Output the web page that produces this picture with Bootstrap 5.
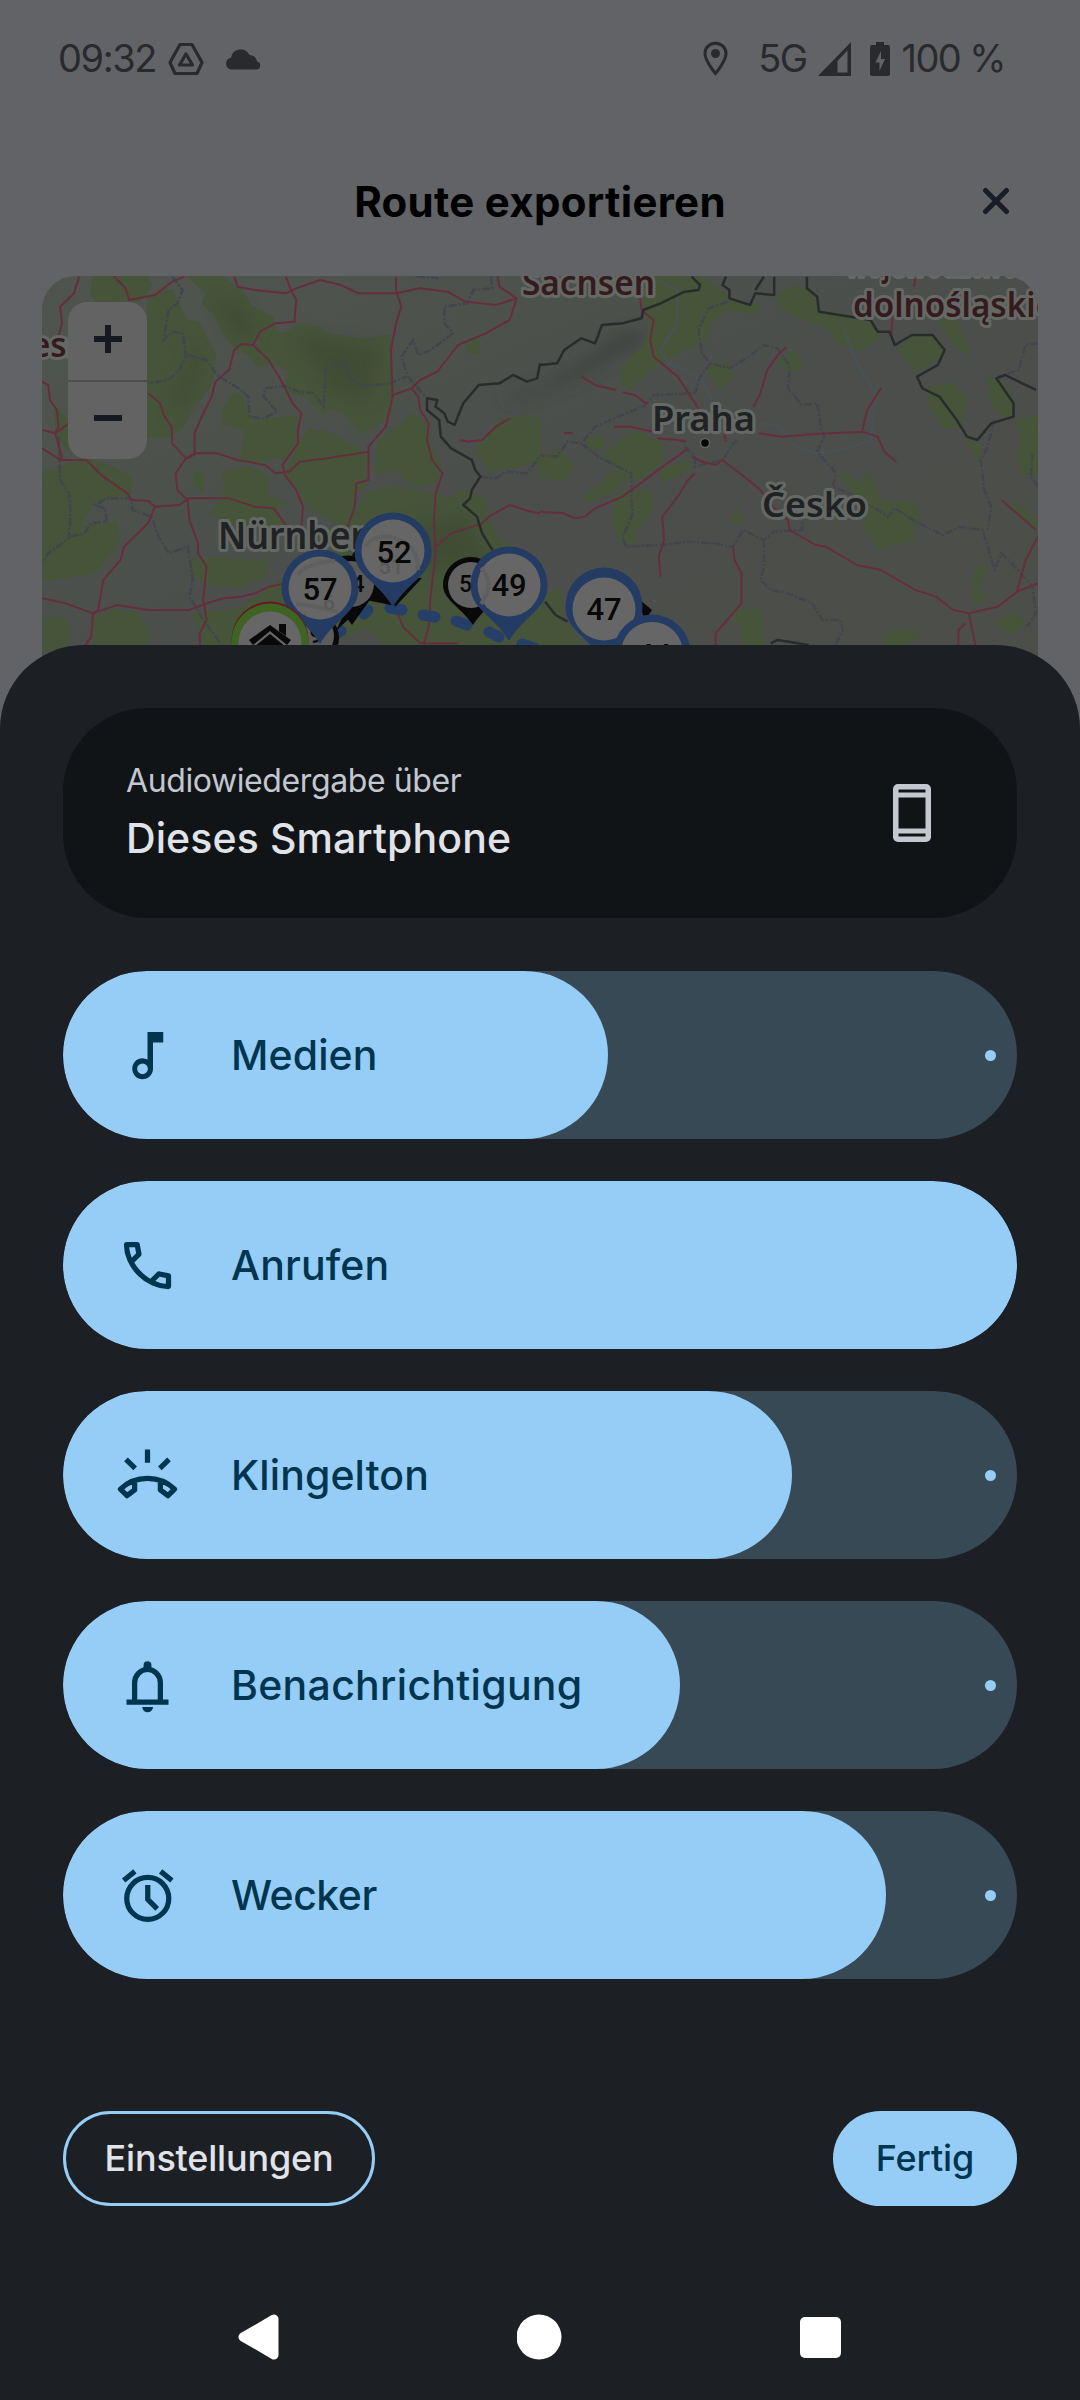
<!DOCTYPE html>
<html lang="de">
<head>
<meta charset="utf-8">
<meta name="viewport" content="width=device-width, initial-scale=1">
<title>Route exportieren</title>
<link href="https://cdn.jsdelivr.net/npm/bootstrap@5.3.0/dist/css/bootstrap.min.css" rel="stylesheet">
<style>
body{width:1080px;height:2400px;overflow:hidden;background:#626367;font-family:Inter,"Liberation Sans",sans-serif;}
svg{display:block;flex:none}
.statusbar{height:117px;padding:0 75px 0 58px;color:#292a2c;font-size:38px}
.titlebar{height:159px}
.title-text{font-weight:700;font-size:42px;letter-spacing:.3px;line-height:50px;color:#000;margin-top:60px}
.close-x{right:70px;top:70px}
.mapbox{margin:0 42px;width:996px;height:460px;border-radius:34px 34px 0 0;overflow:hidden;background:#505450}
.zoomctl{left:26px;top:26px;width:79px;height:157px;border-radius:19px;background:#636363;overflow:hidden}
.zoomctl>div+div{border-top:2px solid #4e4e4e}
.sheet{margin-top:-91px;height:1755px;padding:63px 63px 0;background:#1c1f24;border-radius:84px 84px 0 0;z-index:2}
.device{height:210px;border-radius:84px;background:#101417;padding:0 86px 4px 63px;margin-bottom:53px}
.dev-label{font-size:32px;line-height:44px;letter-spacing:-.4px;color:#c3c7cf}
.dev-name{font-size:41px;line-height:50px;font-weight:500;letter-spacing:.1px;color:#e0e3e8;margin-top:10px}
.vol{height:168px;border-radius:84px;background:#374955;overflow:hidden}
.vol-fill{height:168px;border-radius:84px;background:#95cdf7;color:#003550;padding-left:53px}
.vol-name{font-size:41px;font-weight:500;letter-spacing:.1px;margin-left:52px;padding-top:2px;white-space:nowrap}
.vol-dot{width:11px;height:11px;border-radius:50%;background:#95cdf7;margin-right:21px}
.pillbtn{height:95px;border-radius:48px;font-size:36px;font-weight:500;display:flex;align-items:center;justify-content:center;padding:0 0 2px}
.b-set{width:312px;border:3px solid #95cdf7;color:#e0e3e8;letter-spacing:-.2px}
.b-done{width:184px;background:#95cdf7;color:#003550;letter-spacing:-.1px}
.actions{margin-top:132px}
.navkeys{margin-top:106px;padding:0 176px 0 175px;height:50px}
.halo{font-family:"Noto Sans",sans-serif;font-weight:600;fill:#202223;paint-order:stroke;stroke:#656965;stroke-width:6px;stroke-linejoin:round}
.region{fill:#351b1e}
.pinno{font-family:Roboto,sans-serif;font-weight:500;fill:#080808;text-anchor:middle}
.wood path{fill:#46553a;stroke:#46553a;stroke-width:6;stroke-linejoin:round}
.road path{fill:none;stroke:#662e3d;stroke-width:2;vector-effect:non-scaling-stroke;stroke-linejoin:round}
.county path{fill:none;stroke:#42444e;stroke-width:2.4;stroke-dasharray:8 2 2 2;vector-effect:non-scaling-stroke}
.frontier path{fill:none;stroke:#292c2d;stroke-width:2.5;vector-effect:non-scaling-stroke;stroke-linejoin:round}
.river path{fill:none;stroke:#46545a;stroke-width:1.8;vector-effect:non-scaling-stroke}
</style>
</head>
<body class="position-relative">
<div class="statusbar d-flex align-items-center">
  <span style="letter-spacing:-1.4px">09:32</span>
  <svg style="margin-left:12px" width="36" height="34" viewBox="0 0 36 34" fill="none" stroke="#292a2c" stroke-width="3.2" stroke-linejoin="round"><path d="M12 2.500H24L34 20.500 29 31.500H7L2 20.500Z"/><path d="M18 12L24.500 23H11.500Z"/></svg>
  <svg style="margin-left:21px" width="37" height="22" viewBox="0 0 37 22" fill="#292a2c"><path d="M6 21.500a6 6 0 0 1 0-11.800A9.800 9.800 0 0 1 24.500 7a7.500 7.500 0 0 1 7.500 6.500 4.100 4.100 0 0 1 0 8Z"/></svg>
  <svg class="ms-auto" width="25" height="36" viewBox="0 0 25 36"><path d="M12.500 2.200C6.500 2.200 2 6.700 2 12.500 2 20 12.500 32.500 12.500 32.500S23 20 23 12.500C23 6.700 18.500 2.200 12.500 2.200Z" fill="none" stroke="#292a2c" stroke-width="3"/><circle cx="12.500" cy="12.500" r="4.500" fill="#292a2c"/></svg>
  <span style="margin-left:30px;letter-spacing:-1.6px">5G</span>
  <svg style="margin-left:11px" width="33" height="34" viewBox="0 0 33 34"><path fill="#292a2c" fill-rule="evenodd" d="M33 0V34H0ZM29.500 8.500L19.500 19V30.500H29.500Z"/></svg>
  <svg style="margin-left:19px" width="20" height="34" viewBox="0 0 20 34"><path fill="#292a2c" fill-rule="evenodd" d="M6 0h8v3h4a2 2 0 0 1 2 2v27a2 2 0 0 1-2 2H2a2 2 0 0 1-2-2V5a2 2 0 0 1 2-2h4ZM11 9L5.500 20.500h4V29L15 17h-4Z"/></svg>
  <span style="margin-left:12px;letter-spacing:-1.600px;white-space:nowrap">100 %</span>
</div>
<div class="titlebar position-relative d-flex justify-content-center">
  <div class="title-text">Route exportieren</div>
  <svg class="close-x position-absolute" width="28" height="28" viewBox="0 0 28 28" stroke="#191d27" stroke-width="5" stroke-linecap="round"><path d="M3.500 3.500L24.500 24.500M24.500 3.500L3.500 24.500"/></svg>
</div>
<div class="mapbox position-relative">
<svg width="996" height="460" viewBox="42 276 996 460">
<defs>
<linearGradient id="shade" x1="0" y1="0" x2="1" y2="1"><stop offset="0" stop-color="#4f554e"/><stop offset=".5" stop-color="#4b4e4b"/><stop offset="1" stop-color="#4d4e49"/></linearGradient>
<filter id="soft" x="-20%" y="-40%" width="140%" height="180%"><feGaussianBlur stdDeviation="22"/></filter>
</defs>
<rect x="42" y="276" width="996" height="460" fill="url(#shade)"/>
<g transform="translate(0 260) scale(.34439 .33333)">
<g class="wood">
<path d="M270 50L425 48 440 75 410 120 375 125 330 120 290 135 265 105Z"/>
<path d="M545 48L640 48 700 90 730 140 790 170 800 215 740 235 690 270 650 225 620 160 590 130 600 100Z"/>
<path d="M430 110L500 90 540 180 580 190 625 290 610 380 560 440 530 500 490 530 430 530Z"/>
<path d="M700 260L760 250 745 215 830 220 870 195 920 200 960 225 1010 230 1050 240 1138 225 1130 300 1145 370 1135 460 1100 490 1050 520 1000 460 960 440 940 460 890 410 830 390 840 330 790 310 750 320Z"/>
<path d="M680 400L705 410 720 470 760 480 860 470 855 560 830 600 800 590 740 610 700 600 715 510 650 490 650 440Z"/>
<path d="M870 540L900 510 960 520 1010 550 1065 590 1060 680 1030 700 1030 800 980 790 900 740 860 680 830 650Z"/>
<path d="M1100 540L1170 490 1200 460 1240 490 1250 560 1280 620 1265 670 1200 680 1150 630 1090 640Z"/>
<path d="M650 640L720 620 780 650 770 700 830 730 800 740 820 790 700 800 610 760 640 720 655 690Z"/>
<path d="M122 640L250 595 320 620 380 650 380 700 330 710 270 730 230 800 340 790 345 850 270 940 200 950 122 960Z"/>
<path d="M1070 700L1150 680 1240 700 1300 715 1350 690 1410 720 1420 780 1440 830 1500 870 1568 900 1568 1170 1140 1170 1060 1100 1000 1130 900 1150 700 1160 680 1060 900 900 900 820 1000 800Z"/>
<path d="M550 900L650 895 700 900 780 900 770 950 700 980 600 970 560 940Z"/>
<path d="M1380 570L1420 530 1450 480 1530 465 1568 480V600L1500 620 1420 630Z"/>
<path d="M270 1080L330 1050 400 1060 440 1130 410 1170H280Z"/><path d="M122 1080L180 1075 205 1110 190 1170H122Z"/>
<path d="M560 1060L700 1050 690 1170H600Z"/><path d="M1355 245L1390 235 1390 280 1355 275Z"/><path d="M565 640L590 635 590 700 562 670Z"/><path d="M160 450L200 480 200 570 165 530Z"/>
</g>
<g fill="#3a4632" opacity=".5" filter="url(#soft)"><path d="M490 470L560 260 590 300 540 420Z"/><path d="M620 120L700 130 750 230 690 240Z"/><path d="M860 220L1100 260 1080 420 960 400Z"/><path d="M1150 800L1350 760 1450 950 1200 930Z"/></g>
<g class="county">
<path d="M500 50L530 90 515 130 490 150 475 240 500 215 530 220 540 290 520 330 490 360 430 370"/>
<path d="M545 285L600 300 630 345 700 390 720 410 725 470 765 475 805 455 765 410 770 385 825 378 870 395 910 400 940 440 945 330 1000 305 1020 360 1060 378 1130 370 1180 350"/>
<path d="M1210 50L1280 55M1425 50L1430 85 1375 90 1355 130 1290 140 1290 190 1315 220 1250 270 1215 285 1200 240 1165 290 1185 350 1235 410"/>
<path d="M170 530L175 660 200 700 205 760 200 835 140 880 122 910"/>
<path d="M205 830L245 820 265 790 310 785 305 745 275 735 310 715 380 715 385 750 440 770 460 830 490 880 545 860 560 960 550 1010 590 1080 640 1150"/>
<path d="M1395 650L1440 655 1470 635 1530 640 1568 590"/>
</g>
<g class="road">
<path d="M230 50L215 100 175 140 180 190 170 230"/>
<path d="M330 48L365 85 375 120 450 105 500 65 535 50"/>
<path d="M680 50L690 80 740 90 830 100 860 85 930 60 990 75 1040 100 1150 100 1220 85 1300 95 1350 125 1440 135 1500 115 1450 80 1445 50"/>
<path d="M830 50L845 90 860 120 855 185 800 190 755 215 735 255 700 252 680 270 665 330 625 365 615 410 590 460 565 520 565 580 540 595"/>
<path d="M735 255L780 300 810 350 850 430 875 460 865 510 865 550 820 615 830 650 860 690 880 740 875 800"/>
<path d="M1150 50L1150 90 1165 140 1150 190 1135 270 1140 410 1120 500 1070 560 1070 660 1035 670 1030 740 1010 800"/>
<path d="M1500 115L1480 180 1410 220 1330 255 1270 335 1220 360 1195 385 1140 405"/>
<path d="M1195 385L1215 410 1220 450 1245 490 1240 540 1255 600 1285 640 1265 700 1260 780 1265 880 1250 1010 1245 1100 1230 1155"/>
<path d="M430 400L465 430 475 465 498 500 500 550 540 595 510 640 515 690 545 720 550 780 575 850 575 880 600 920 590 1020 600 1080 580 1120 580 1160"/>
<path d="M122 510L160 520 200 490M122 365L140 375 145 420 165 450 170 500 160 520 180 590 175 600 122 565M175 600L250 600 300 650 370 700 380 720 430 722 450 740 520 735 545 718"/>
<path d="M545 595L570 580 630 580 690 600 770 615 800 640 840 635 870 605 950 595 1070 575"/>
<path d="M545 715L665 715 740 740 795 745 830 795"/>
<path d="M450 740L430 790 360 860 350 900 300 960 285 1050 270 1060 265 1130 245 1160"/>
<path d="M122 1015L190 1030 270 1060 340 1035 430 1050 550 1050 600 1030 650 1015 700 1010 740 1000 780 980 830 970"/>
<path d="M1265 860L1310 820 1400 790 1420 770 1480 735 1540 755 1568 760"/>
<path d="M1335 540L1360 545 1400 540 1440 500 1480 475M1150 1050L1170 1100 1220 1150 1330 1150"/>
</g>
<g class="frontier"><path d="M1568 310L1560 355 1530 365 1490 345 1450 370 1390 375 1345 430 1320 495 1300 485 1290 460 1265 440 1270 420 1240 415 1240 450 1275 480 1280 530 1310 565 1370 600 1380 630 1395 650 1370 690 1365 715 1345 735 1385 770 1400 820 1430 870"/></g>
</g>
<g transform="translate(540 260) scale(.34439 .33333)">
<path d="M-120 420L0 380 130 300 230 220 310 210 300 250 200 300 100 360-60 420Z" fill="#3c403c" opacity=".75" filter="url(#soft)"/>
<g class="wood">
<path d="M305 48L460 48 520 90 560 120 640 140 620 160 540 150 490 190 490 230 440 260 360 300 320 330 260 385 235 370 240 320 300 260 320 200 300 150Z"/>
<path d="M690 100L740 80 780 90 810 155 870 160 960 190 990 230 930 270 860 240 830 200 730 165 695 140Z"/>
<path d="M1040 270L1100 220 1160 240 1175 280 1120 320 1090 330Z"/>
<path d="M1130 380L1200 370 1240 420 1215 500 1170 500 1130 440Z"/>
<path d="M1150 180L1210 180 1250 280 1220 270Z"/><path d="M1295 350L1350 370 1380 440 1360 470 1320 450Z"/>
<path d="M495 310L550 310 560 350 525 380 490 340ZM690 300L740 275 765 310 740 335 700 320Z"/>
<path d="M245 530L290 515 355 550 350 610 300 650 250 660 200 700 140 725 130 710 190 660 220 620 180 590Z"/>
<path d="M0 590L60 570 100 620 70 660 0 650ZM130 540L180 530 185 560 150 575ZM350 630L430 600 435 630 360 665Z"/>
<path d="M220 710L260 690 325 700 320 760 280 810 270 850 240 850 215 790Z"/>
<path d="M860 635L930 670 950 640 985 700 980 730 1070 725 1100 750 1080 840 1040 850 980 860 940 800 950 770 920 710Z"/>
<path d="M555 780L575 745 585 790ZM1235 540L1280 560 1270 600ZM1265 925L1300 920 1270 980 1290 1020 1260 1030Z"/>
<path d="M1385 480L1446 470V640L1400 640 1385 590 1400 540ZM1360 730L1410 750 1446 800 1420 790Z"/>
<path d="M560 1050L640 1050 650 1170H590L590 1120ZM1000 1120L1050 1110 1100 1120 1050 1170H1000ZM1320 1090L1380 1060 1410 1090 1370 1120Z"/>
<path d="M-40 960L0 1000 60 990 70 1080 130 1170H-40Z"/>
</g>
<g class="river"><path d="M340 60L400 90 400 190 350 270 370 310 420 330 470 360 500 420M640 490L700 500 740 560 800 580 900 565 960 540 975 400 920 310 880 200"/></g>
<g class="county">
<path d="M545 125L490 145 460 210 470 280 495 310 550 325 600 295 650 255 690 265 725 320 720 385 760 435 805 430 815 500 825 530 805 575 860 640 850 680 900 700 980 750 1010 770 1030 745 1100 790 1170 825 1220 800 1285 810 1300 860 1320 930 1340 880 1370 910 1430 980 1440 1060 1415 1100"/>
<path d="M495 310L465 350 450 400 330 405 300 440 250 460 160 500 120 550 80 545 50 590 0 585"/>
<path d="M120 550L170 590 265 640 265 720 270 760 240 830 250 860 350 855 430 845 500 850 560 860 590 810 650 840 680 815 760 810 765 770"/>
<path d="M650 840L650 920 640 960 670 990 720 1000 790 1030 820 1080 870 1080 880 1110 850 1170"/>
<path d="M1320 480L1300 560 1280 600 1290 690 1310 740 1300 810M1446 250L1410 255 1390 330 1330 350M1430 580L1425 650 1446 680"/>
<path d="M420 560L450 590 450 620 530 600 555 560 570 540"/>
</g>
<g class="road">
<path d="M290 110L295 150 330 180 320 240 330 290 400 350 460 445"/>
<path d="M120 350L160 375 220 390M240 397L275 405 310 432M70 520L95 518M215 500L260 500 330 515M340 535L400 540 425 545"/>
<path d="M715 262L690 285 660 330 640 400 620 440M635 520L700 530 800 522 935 515 950 450 990 385M935 515L980 530 1000 575 1035 607"/>
<path d="M0 755L70 760 100 775 130 770 160 745 240 710 330 640 430 565M450 640L430 660 400 710 355 770 360 840 345 890 350 950"/>
<path d="M440 590L470 605 510 615 530 600 605 660 640 690 680 745 720 780 725 810 800 855 830 860 920 915 990 930 1090 990 1150 1010 1200 1050 1245 1060 1330 1040 1385 995 1446 970M1385 995L1410 900 1446 830M1340 720L1440 810M1245 1060L1265 1160M1235 1090L1215 1110 1215 1160"/>
<path d="M560 860L565 900 585 940 585 1030 510 1120 510 1160M1090 55L1085 80M1025 150L1020 220M535 520L540 545"/>
<path d="M1385 50L1420 75 1446 115"/>
</g>
<g class="frontier">
<path d="M440 50L465 75 460 90 420 95 350 130 300 150 295 175 240 190 180 195 160 250 120 235 70 270 50 310 0 315"/>
<path d="M540 50L530 75 550 90 550 115 610 135 625 100 680 105 680 50M625 90L650 50"/>
<path d="M775 50L775 85 805 110 810 155 960 180 980 215 1015 215 1030 255 1080 225 1140 225 1175 270 1155 315 1095 350 1110 385 1160 410 1210 480 1240 530 1270 540 1310 490 1375 470 1375 430 1325 355 1350 345 1440 390"/>
<path d="M15 1025L45 1065 80 1085M670 1150L690 1140 780 1155"/>
</g>
</g>
<g class="halo">
<text x="31" y="357" class="region" font-size="35" textLength="52" lengthAdjust="spacingAndGlyphs">ess</text>
<text x="522" y="295" class="region" font-size="35" textLength="133" lengthAdjust="spacingAndGlyphs">Sachsen</text>
<text x="846" y="276" class="region" font-size="35" textLength="172" lengthAdjust="spacingAndGlyphs">województwo</text>
<text x="853" y="317" class="region" font-size="35" textLength="202" lengthAdjust="spacingAndGlyphs">dolnośląskie</text>
<text x="218" y="549" font-size="37" textLength="170" lengthAdjust="spacingAndGlyphs">Nürnberg</text>
<text x="652" y="431" font-size="34.500" textLength="103" lengthAdjust="spacingAndGlyphs">Praha</text>
<text x="762" y="517" font-size="34.500" textLength="105" lengthAdjust="spacingAndGlyphs">Česko</text>
</g>
<circle cx="705" cy="443" r="4.500" fill="#060606" stroke="#60645f" stroke-width="1.500"/>
<path d="M329 639L341 631M364 614L368 610M390 608L402 610M423 615L435 617M456 621L467 625M489 632L499 637M522 644L534 648" stroke="#263f69" stroke-width="11" stroke-linecap="round" fill="none"/>
<g fill="#090909">
<path d="M319 580a29 29 0 1 1 58 10L352 625Z"/><path d="M352 555l12-16 10 6v30Z"/><path d="M364 575L422 578 396 606 366 600Z"/>
<path d="M443 585a28 28 0 1 1 56 0C499 600 485 607 473 625 461 607 443 600 443 585Z"/>
<circle cx="312" cy="638" r="27"/><path d="M336 631L358 610 350 600Z"/><path d="M640 600l12 10-8 12Z"/>
</g>
<circle cx="351" cy="584" r="23" fill="#595959"/><circle cx="471" cy="585" r="23" fill="#626262"/><circle cx="312" cy="636" r="22" fill="#5c5c5c"/>
<text class="pinno" x="358" y="592" font-size="23">4</text><text class="pinno" x="472" y="592" font-size="23">50</text><text class="pinno" x="316" y="643" font-size="23">9</text>
<g fill="#243c64">
<path id="pin" d="M354.500 551a38.500 38.500 0 1 1 77 0C431.500 576 410 579 393 607 376 579 354.500 576 354.500 551Z"/>
<use href="#pin" x="-73" y="37"/><use href="#pin" x="116" y="34"/><use href="#pin" x="211" y="55"/>
</g>
<g fill="#666"><circle cx="393" cy="551" r="31.500"/><circle cx="320" cy="588" r="31.500"/><circle cx="509" cy="585" r="31.500"/><circle cx="604" cy="609" r="31.500"/></g>
<g fill="none" stroke="#5f5f5f" stroke-width="4"><path d="M365 546q10-12 26-9q28 7 27 33M297 575q12-13 38-14M296 604q22 2 42 8M481 568q15 15 0 36"/></g>
<text class="pinno" x="391" y="574" font-size="22" style="fill:#595959">51</text><text class="pinno" x="329" y="610" font-size="21" style="fill:#595959">6</text>
<use href="#pin" x="259" y="102" fill="#243c64"/><circle cx="652" cy="653" r="31" fill="#666"/>
<g class="pinno" font-size="31"><text x="394" y="563">52</text><text x="320" y="600">57</text><text x="509" y="596">49</text><text x="604" y="620">47</text><text x="654" y="666">44</text></g>
<circle cx="270" cy="640" r="38.500" fill="#651920"/><circle cx="270" cy="642" r="38.500" fill="#3f6322"/><circle cx="270" cy="643" r="31.500" fill="#666"/>
<g fill="#090909"><path d="M249 640L270 625 291 640 287 645 270 631 253 645Z"/><path d="M279 624h7v12l-7-5Z"/><path d="M254 647L270 634 286 647V665H254Z"/></g>
</svg>
<div class="zoomctl position-absolute d-flex flex-column">
<div class="flex-fill d-flex align-items-center justify-content-center pb-1"><svg width="28" height="28" viewBox="0 0 28 28" stroke="#151922" stroke-width="6"><path d="M0 14H28M14 0V28"/></svg></div>
<div class="flex-fill d-flex align-items-center justify-content-center pb-1"><svg width="28" height="28" viewBox="0 0 28 28" stroke="#151922" stroke-width="6"><path d="M0 14H28"/></svg></div>
</div>
</div>

<div class="sheet position-relative">
  <div class="device d-flex align-items-center justify-content-between">
    <div><div class="dev-label">Audiowiedergabe über</div><div class="dev-name">Dieses Smartphone</div></div>
    <svg class="mt-1" width="38" height="58" viewBox="0 0 38 58"><path fill="#c3c7cf" fill-rule="evenodd" d="M5 0H33a5 5 0 0 1 5 5V53a5 5 0 0 1-5 5H5a5 5 0 0 1-5-5V5A5 5 0 0 1 5 0ZM5.500 5.500V8.500H32.500V5.500ZM5.500 13.500V44.500H32.500V13.500ZM5.500 49.500V52.500H32.500V49.500Z"/></svg>
  </div>
  <div class="d-flex flex-column" style="gap:42px">
    <div class="vol d-flex align-items-center justify-content-between"><div class="vol-fill d-flex align-items-center" style="width:545px">
      <svg width="63" height="63" viewBox="0 0 24 24" fill="currentColor"><path d="M12 3v10.550A3.900 3.900 0 0 0 10.100 13C7.900 13 6.200 14.800 6.200 17s1.700 4 3.900 4 4-1.800 4-4V7H18V3Zm-1.900 16.100a2.050 2.050 0 1 1 0-4.100 2.050 2.050 0 0 1 0 4.100Z"/></svg>
      <span class="vol-name">Medien</span></div><div class="vol-dot"></div></div>
    <div class="vol"><div class="vol-fill d-flex align-items-center w-100">
      <svg width="63" height="63" viewBox="0 0 24 24" fill="currentColor"><path d="M19.950 21q-3.125 0-6.175-1.362T8.225 15.775T4.363 10.225T3 4.050q0-.45.3-.75t.75-.3H8.100q.35 0 .625.238t.325.562l.65 3.500q.05.4-.025.675T9.400 8.450L6.975 10.900q.5.925 1.187 1.787t1.513 1.663q.775.775 1.625 1.438T13.100 17l2.350-2.350q.225-.225.588-.337t.712-.063l3.450.7q.35.1.575.363T21 15.900v4.050q0 .45-.3.75t-.75.3M6.025 9l1.650-1.650L7.250 5H5.025q.125 1.025.35 2.025T6.025 9m8.950 8.950q.975.425 1.988.675T19 18.950v-2.200l-2.350-.475z"/></svg>
      <span class="vol-name">Anrufen</span></div></div>
    <div class="vol d-flex align-items-center justify-content-between"><div class="vol-fill d-flex align-items-center" style="width:729px">
      <svg width="63" height="63" viewBox="0 0 24 24" fill="none" stroke="currentColor" stroke-width="2"><path d="M12 2.100V7.100M3.800 5.900L7.300 9.300M20.200 5.900L16.700 9.300"/><path stroke-linejoin="round" d="M12 13.100C8.200 13.100 4.500 14.500 1.700 17.200L4.200 19.700 7.100 17.500V14M12 13.100C15.800 13.100 19.500 14.500 22.300 17.200L19.800 19.700 16.900 17.500V14"/></svg>
      <span class="vol-name">Klingelton</span></div><div class="vol-dot"></div></div>
    <div class="vol d-flex align-items-center justify-content-between"><div class="vol-fill d-flex align-items-center" style="width:617px">
      <svg width="63" height="63" viewBox="0 0 24 24" fill="none" stroke="currentColor" stroke-width="2"><path d="M4 18.300H20M7.100 18.300V11a4.900 5.100 0 0 1 9.800 0V18.300"/><path fill="currentColor" stroke="none" d="M10 20.200h4.100a2.050 1.950 0 0 1-4.100 0ZM10.500 6V4.300a1.500 1.500 0 0 1 3 0V6Z"/></svg>
      <span class="vol-name" style="letter-spacing:.3px">Benachrichtigung</span></div><div class="vol-dot"></div></div>
    <div class="vol d-flex align-items-center justify-content-between"><div class="vol-fill d-flex align-items-center" style="width:823px">
      <svg width="63" height="63" viewBox="0 0 24 24" fill="none" stroke="currentColor" stroke-width="2"><circle cx="12.100" cy="13.100" r="8"/><path d="M12.100 8V13.500L15.700 17.100M2.900 6.300L7.200 2.800M21.300 6.300L17 2.800"/></svg>
      <span class="vol-name" style="letter-spacing:-.5px">Wecker</span></div><div class="vol-dot"></div></div>
  </div>
  <div class="actions d-flex justify-content-between">
    <button class="btn pillbtn b-set">Einstellungen</button>
    <button class="btn pillbtn b-done">Fertig</button>
  </div>
  <div class="navkeys d-flex align-items-center justify-content-between">
    <svg width="42" height="48" viewBox="0 0 42 48"><path d="M5 24L36 6V42Z" fill="#fff" stroke="#fff" stroke-width="9" stroke-linejoin="round"/></svg>
    <svg width="46" height="46" viewBox="0 0 46 46"><circle cx="22" cy="23" r="22.500" fill="#fff"/></svg>
    <svg width="41" height="41" viewBox="0 0 41 41"><rect width="41" height="41" rx="5" fill="#fff"/></svg>
  </div>
</div>
<script src="https://cdn.jsdelivr.net/npm/bootstrap@5.3.0/dist/js/bootstrap.bundle.min.js"></script>
</body>
</html>
